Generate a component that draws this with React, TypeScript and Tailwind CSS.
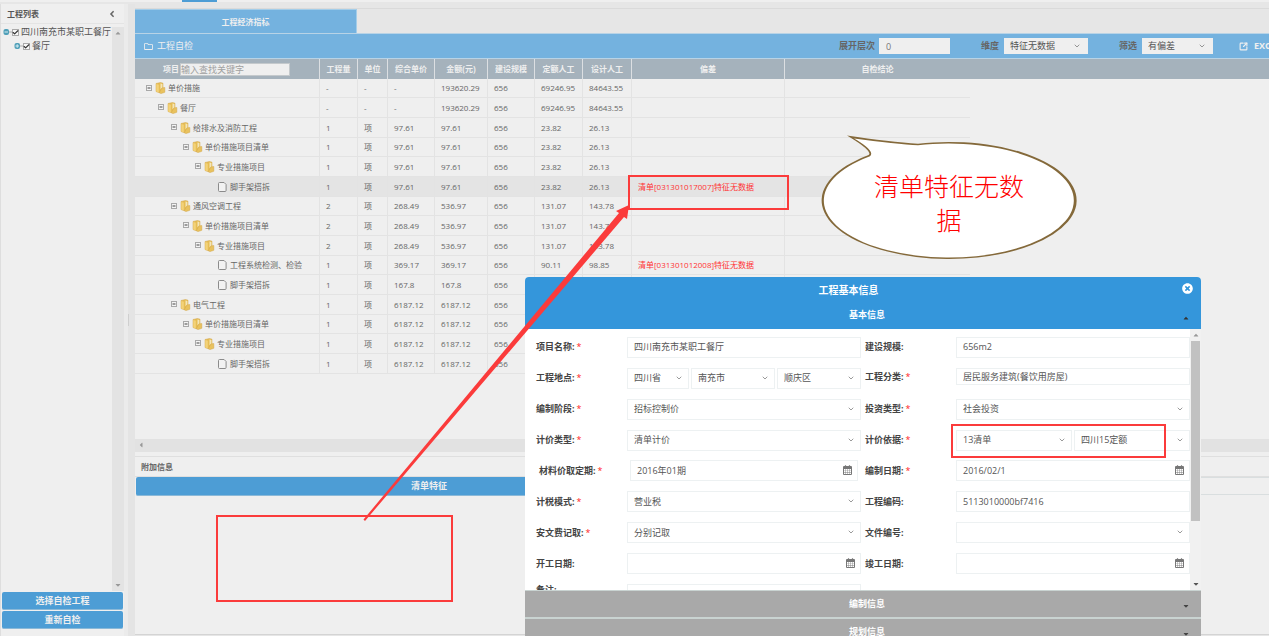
import React, { useState } from 'react';
import { Check, ChevronDown, SquareArrowOutUpRight } from 'lucide-react';
import { FaAngleLeft, FaCaretDown, FaCaretLeft, FaCaretUp, FaRegFolder, FaTimesCircle } from 'react-icons/fa';

interface Row {
  level: number;
  name: string;
  leaf?: boolean;
  cells: string[];
}

const COLUMNS = ['工程量', '单位', '综合单价', '金额(元)', '建设规模', '定额人工', '设计人工', '偏差', '自检结论'];

const ROWS: Row[] = [
  { level: 0, name: '单价措施', cells: ['-', '-', '-', '193620.29', '656', '69246.95', '84643.55', ''] },
  { level: 1, name: '餐厅', cells: ['-', '-', '-', '193620.29', '656', '69246.95', '84643.55', ''] },
  { level: 2, name: '给排水及消防工程', cells: ['1', '项', '97.61', '97.61', '656', '23.82', '26.13', ''] },
  { level: 3, name: '单价措施项目清单', cells: ['1', '项', '97.61', '97.61', '656', '23.82', '26.13', ''] },
  { level: 4, name: '专业措施项目', cells: ['1', '项', '97.61', '97.61', '656', '23.82', '26.13', ''] },
  { level: 5, name: '脚手架搭拆', leaf: true, cells: ['1', '项', '97.61', '97.61', '656', '23.82', '26.13', '清单[031301017007]特征无数据'] },
  { level: 2, name: '通风空调工程', cells: ['2', '项', '268.49', '536.97', '656', '131.07', '143.78', ''] },
  { level: 3, name: '单价措施项目清单', cells: ['2', '项', '268.49', '536.97', '656', '131.07', '143.78', ''] },
  { level: 4, name: '专业措施项目', cells: ['2', '项', '268.49', '536.97', '656', '131.07', '143.78', ''] },
  { level: 5, name: '工程系统检测、检验', leaf: true, cells: ['1', '项', '369.17', '369.17', '656', '90.11', '98.85', '清单[031301012008]特征无数据'] },
  { level: 5, name: '脚手架搭拆', leaf: true, cells: ['1', '项', '167.8', '167.8', '656', '', '', ''] },
  { level: 2, name: '电气工程', cells: ['1', '项', '6187.12', '6187.12', '656', '', '', ''] },
  { level: 3, name: '单价措施项目清单', cells: ['1', '项', '6187.12', '6187.12', '656', '', '', ''] },
  { level: 4, name: '专业措施项目', cells: ['1', '项', '6187.12', '6187.12', '656', '', '', ''] },
  { level: 5, name: '脚手架搭拆', leaf: true, cells: ['1', '项', '6187.12', '6187.12', '656', '', '', ''] },
];

const FolderIcon = () => (
  <svg width="11" height="12" viewBox="0 0 11 12" className="shrink-0">
    <path d="M1 1.5 5.500 .5 8 1.200v9.300H3.500L1 9.500z" fill="#e6bd55" stroke="#d3a648" strokeWidth=".5" />
    <path d="M1.300 2 3.800 2.800v7.400L1.300 9.500z" fill="#f3d27a" />
    <path d="M5.500 1.400 7.400 1.900v4.600l-1.900.8z" fill="#f4e6b8" />
    <path d="M6.800 6 9.800 5.500v4.800L6 11.600 4.200 10.800z" fill="#e9c25e" stroke="#d3a648" strokeWidth=".5" />
  </svg>
);

const FileIcon = () => (
  <svg width="11" height="12" viewBox="0 0 11 12" className="shrink-0">
    <path d="M2.500 1.500h4.600l2 2v6q0 1-1 1H2.500q-1 0-1-1v-7q0-1 1-1z" fill="#f2f2f2" stroke="#8b8b8b" strokeWidth="1" />
  </svg>
);

const MinusBox = () => (
  <svg width="7" height="7" viewBox="0 0 7 7" className="shrink-0">
    <rect x=".5" y=".5" width="5" height="5" fill="#f4f4f4" stroke="#a8a8a8" />
    <path d="M1.500 3h3" stroke="#444" />
  </svg>
);

const CalendarIcon = () => (
  <svg width="9" height="10" viewBox="0 0 9 10" className="pointer-events-none absolute top-[5px] right-[6px]">
    <rect y="1" width="9" height="9" rx="1" fill="#777" />
    <path d="M1 4h1.600v1.400H1zM3 4h1.300v1.400H3zM4.700 4H6v1.400H4.700zM6.400 4H8v1.400H6.400zM1 5.800h1.600v1.300H1zM3 5.800h1.300v1.300H3zM4.700 5.800H6v1.300H4.700zM6.400 5.800H8v1.300H6.400zM1 7.500h1.600V9H1zM3 7.500h1.300V9H3zM4.700 7.500H6V9H4.700zM6.400 7.500H8V9H6.400z" fill="#fff" />
    <path d="M2.500 .3v2M6.500 .3v2" stroke="#777" strokeWidth="1.200" />
  </svg>
);

const TreeCheck = ({ label, child }: { label: string; child?: boolean }) => (
  <label className={`flex h-[14px] items-center text-[9px] whitespace-nowrap text-[#555] ${child ? 'pl-[13px]' : 'pl-[2px]'}`}>
    <svg width="9" height="8" viewBox="0 0 9 8" className="shrink-0">
      <rect x=".5" y="1" width="5.500" height="6" rx="2" fill="#4f9fb8" />
      <path d={child ? 'M1.5 4h3.5M3.2 2.3v3.5' : 'M1.5 4h3.5'} stroke="#d8edf2" />
      <path d="M6 4h3" stroke="#aaa" />
    </svg>
    <span className="relative mr-[2px] flex">
      <input type="checkbox" defaultChecked className="h-[7px] w-[7px] appearance-none border border-[#aaa] bg-[#f8f8f8]" />
      <Check className="pointer-events-none absolute top-0 left-0 h-[7px] w-[7px] text-[#333]" strokeWidth={4} />
    </span>
    {label}
  </label>
);

interface PickProps {
  id?: string;
  label?: string;
  value: string;
  className?: string;
}

const Pick = ({ id, label, value, className = 'flex-1' }: PickProps) => (
  <span className={`relative flex h-[21px] ${className}`}>
    <select id={id} aria-label={label} className="w-full appearance-none border border-[#edf1f2] bg-white pl-[6px] text-[9px] text-[#555] outline-none">
      <option>{value}</option>
    </select>
    <ChevronDown className="pointer-events-none absolute top-[6px] right-[6px] h-2 w-2 text-[#666]" />
  </span>
);

const TextBox = ({ id, value, date, className = 'h-[21px]' }: { id: string; value: string; date?: boolean; className?: string }) => (
  <span className={`relative flex flex-1 ${className}`}>
    <input id={id} defaultValue={value} className="w-full min-w-0 border border-[#edf1f2] bg-white pl-[6px] text-[9px] text-[#555] outline-none" />
    {date && <CalendarIcon />}
  </span>
);

interface FieldProps {
  id: string;
  label: string;
  required?: boolean;
  className?: string;
  children: React.ReactNode;
}

const Field = ({ id, label, required, className = 'items-center', children }: FieldProps) => (
  <div className={`flex ${className}`}>
    <label htmlFor={id} className="w-[91px] shrink-0 text-[9px] font-bold whitespace-nowrap text-[#444]">
      {label}:{required && <span className="pl-[2px] font-normal text-[#f22]">*</span>}
    </label>
    {children}
  </div>
);

const ProjectDialog = () => (
  <div role="dialog" aria-label="工程基本信息" className="absolute top-[277px] bottom-0 left-[525px] flex w-[676px] flex-col overflow-hidden rounded-t-sm bg-white">
    <div className="flex h-[25px] shrink-0 items-center bg-[#3496db] pr-[8px] text-white">
      <h2 className="flex-1 pr-[10px] text-center text-[10px] font-bold">工程基本信息</h2>
      <button type="button" aria-label="关闭" className="mb-[3px]">
        <FaTimesCircle className="h-[11px] w-[11px]" />
      </button>
    </div>
    <button type="button" className="flex h-[27px] shrink-0 items-center bg-[#3496db] pr-[11px] pl-[27px] text-[9px] font-bold text-white">
      <span className="flex-1 pb-[2px]">基本信息</span>
      <FaCaretUp className="mt-[4px] h-[8px] w-[8px] text-[#333]" />
    </button>
    <div className="flex h-[261px] shrink-0 overflow-hidden">
      <form className="mt-[3px] grid h-[278px] flex-1 auto-rows-fr grid-cols-2 gap-x-1 pl-[11px]">
        <Field id="name" label="项目名称" required><TextBox id="name" value="四川南充市某职工餐厅" /></Field>
        <Field id="scale" label="建设规模"><TextBox id="scale" value="656m2" /></Field>
        <Field id="place" label="工程地点" required>
          <span className="flex flex-1 gap-[2px]">
            <Pick id="place" value="四川省" className="w-[62px]" />
            <Pick label="市" value="南充市" className="flex-1" />
            <Pick label="区" value="顺庆区" className="flex-1" />
          </span>
        </Field>
        <Field id="kind" label="工程分类" required className="items-center pb-[3px]"><TextBox id="kind" value="居民服务建筑(餐饮用房屋)" className="h-[17px]" /></Field>
        <Field id="stage" label="编制阶段" required><Pick id="stage" value="招标控制价" /></Field>
        <Field id="invest" label="投资类型" required><Pick id="invest" value="社会投资" /></Field>
        <Field id="pricing" label="计价类型" required><Pick id="pricing" value="清单计价" /></Field>
        <Field id="basis" label="计价依据" required>
          <span className="flex flex-1 gap-[2px]">
            <Pick id="basis" value="13清单" className="flex-1" />
            <Pick label="定额" value="四川15定额" className="flex-1" />
          </span>
        </Field>
        <Field id="period" label="材料价取定期" required className="items-center px-[3px]"><TextBox id="period" value="2016年01期" date /></Field>
        <Field id="made" label="编制日期" required><TextBox id="made" value="2016/02/1" date /></Field>
        <Field id="tax" label="计税模式" required><Pick id="tax" value="营业税" /></Field>
        <Field id="code" label="工程编码"><TextBox id="code" value="5113010000bf7416" /></Field>
        <Field id="fee" label="安文费记取" required><Pick id="fee" value="分别记取" /></Field>
        <Field id="file" label="文件编号"><Pick id="file" value="" /></Field>
        <Field id="start" label="开工日期"><TextBox id="start" value="" date /></Field>
        <Field id="end" label="竣工日期"><TextBox id="end" value="" date /></Field>
        <Field id="note" label="备注" className="items-start pt-[5px]"><TextBox id="note" value="" /></Field>
      </form>
      <div className="flex w-[11px] flex-col items-center bg-[#f1f1f1] text-[#555]">
        <FaCaretUp className="my-[2px] h-[8px] w-[8px] shrink-0 text-[#999]" />
        <div className="h-[180px] w-[9px] bg-[#c1c1c1]" />
        <FaCaretDown className="mt-auto mb-[2px] h-[8px] w-[8px] shrink-0" />
      </div>
    </div>
    {['编制信息', '规划信息'].map(title => (
      <button key={title} type="button" className="flex h-[28px] shrink-0 items-center border-t border-b border-[#c9d3d1] bg-[#a9a9a9] pr-[11px] pl-[27px] text-[9px] font-bold text-white">
        <span className="flex-1">{title}</span>
        <FaCaretDown className="mt-[4px] h-[8px] w-[8px] text-[#444]" />
      </button>
    ))}
  </div>
);

const ToolPick = ({ id, label, value, className }: { id: string; label: string; value: string; className: string }) => (
  <span className="flex items-center gap-[5px]">
    <label htmlFor={id} className="font-bold text-[#666]">{label}</label>
    <span className={`relative flex h-4 ${className}`}>
      <select id={id} className="w-full appearance-none bg-[#efefef] pl-[6px] text-[9px] text-[#555] outline-none">
        <option>{value}</option>
      </select>
      <ChevronDown className="pointer-events-none absolute top-1 right-[7px] h-2 w-2 text-[#666]" />
    </span>
  </span>
);

const App: React.FC = () => {
  const [selected, setSelected] = useState(5);

  return (
    <div className="relative flex h-screen flex-col overflow-hidden bg-[#e6e6e6] font-['Open_Sans','Noto_Sans_CJK_SC',sans-serif] text-[8px] leading-[12px] text-[#666]">
      <div className="h-[4px] shrink-0 border-b-2 border-[#e6e6e6] bg-[#efefef] pl-[182px]">
        <div className="h-[2px] w-[35px] bg-[#4d9dd5]" />
      </div>
      <div className="flex min-h-0 flex-1">
        <aside className="flex w-[124px] shrink-0 flex-col border-l border-[#dedede] bg-[#efefef] pb-[7px]">
          <div className="flex h-[20px] shrink-0 items-center justify-between border-b border-[#e4e4e4] pr-[7px] pl-[6px]">
            <h2 className="font-bold text-[#555]">工程列表</h2>
            <button type="button" aria-label="收起"><FaAngleLeft className="h-[10px] w-[10px]" /></button>
          </div>
          <div className="flex flex-1">
            <div className="w-[111px] pt-[1px]">
              <TreeCheck label="四川南充市某职工餐厅" />
              <TreeCheck label="餐厅" child />
            </div>
            <div className="mt-[3px] flex flex-1 flex-col items-center justify-between bg-[#e3e3e3] pt-[2px] pb-[2px] text-[#999]">
              <FaCaretUp className="h-[8px] w-[8px]" />
              <FaCaretDown className="h-[8px] w-[8px]" />
            </div>
          </div>
          <div className="flex flex-col gap-[1px] pt-[1px] pr-[1px] pl-[1px]">
            <button type="button" className="h-[18px] rounded-[2px] border-b border-[#8bb9d8] bg-[#4d9dd5] text-[9px] font-bold text-[#efefef]">选择自检工程</button>
            <button type="button" className="h-[18px] rounded-[2px] border-b border-[#8bb9d8] bg-[#4d9dd5] text-[9px] font-bold text-[#efefef]">重新自检</button>
          </div>
        </aside>
        <div className="flex w-[11px] shrink-0 items-center border-l-4 border-[#ebebeb] bg-[#e4e4e4]">
          <div className="h-[12px] w-[1px] bg-[#cfcfcf]" />
        </div>

        <main className="mt-[4px] flex min-w-0 flex-1 flex-col border-t border-[#dadada] pb-[1px]">
          <div className="h-[24px] shrink-0">
            <button type="button" className="block h-full w-[222px] border-t border-r border-[#a3cde9] bg-[#74b2df] font-bold text-[#efefef]">工程经济指标</button>
          </div>
          <div className="flex h-[26px] shrink-0 items-center border-t border-b border-[#b8d3e6] bg-[#74b2df] pl-[9px] text-[9px]">
            <FaRegFolder className="mr-[4px] h-[9px] w-[9px] text-[#efefef]" />
            <span className="text-[#efefef]">工程自检</span>
            <div className="ml-auto flex shrink-0 items-center">
              <label htmlFor="depth" className="mr-[4px] font-bold text-[#666]">展开层次</label>
              <input id="depth" defaultValue="0" className="mr-[31px] h-4 w-[71px] bg-[#efefef] pl-[7px] text-[9px] text-[#777] outline-none" />
              <ToolPick id="dimension" label="维度" value="特征无数据" className="mr-[31px] w-[84px]" />
              <ToolPick id="filter" label="筛选" value="有偏差" className="mr-[26px] w-[71px]" />
              <button type="button" className="flex w-[30px] items-center gap-[6px] font-bold text-[#efefef]">
                <SquareArrowOutUpRight className="h-[9px] w-[9px] shrink-0" strokeWidth={3} />
                EXC
              </button>
            </div>
          </div>

          <div className="relative h-[380px] shrink-0 overflow-hidden bg-[#efefef]">
            <div className="absolute inset-x-0 top-0 h-[20px] bg-[#a5b2bc]" />
            <table className="relative w-[835px] table-fixed border-separate border-spacing-0">
              <colgroup>
                <col className="w-[185px]" />
                <col className="w-[38px]" />
                <col className="w-[30px]" />
                <col className="w-[47px]" />
                <col className="w-[53px]" />
                <col className="w-[47px]" />
                <col className="w-[48px]" />
                <col className="w-[49px]" />
                <col className="w-[153px]" />
                <col className="w-[185px]" />
              </colgroup>
              <thead>
                <tr className="h-[20px] bg-[#a5b2bc] text-[#efefef]">
                  <th className="border-r border-[#dcdfe2] p-0">
                    <label className="flex items-center pl-[28px]">
                      项目
                      <input placeholder="输入查找关键字" className="ml-[1px] h-[13px] w-[110px] border border-[#c4c9cc] bg-[#efefef] text-[9px] font-normal text-[#666] outline-none placeholder:text-[#a0a0a0]" />
                    </label>
                  </th>
                  {COLUMNS.map((title, i) => (
                    <th key={title} className={`p-0 font-bold whitespace-nowrap ${i < 8 ? 'border-r border-[#dcdfe2]' : ''}`}>{title}</th>
                  ))}
                </tr>
              </thead>
              <tbody>
                {ROWS.map((row, i) => (
                  <tr key={i} onClick={() => setSelected(i)} className={`${i % 3 === 0 ? 'h-[19px]' : 'h-[20px]'} ${i === selected ? 'bg-[#e4e4e4]' : ''}`}>
                    <td className="border-r border-b border-[#e3e3e3] p-0">
                      <span className="flex items-center whitespace-nowrap" style={{ paddingLeft: 11 + Math.round(row.level * 12.3) }}>
                        {row.leaf ? <span className="w-[7px]" /> : <MinusBox />}
                        <span className="mr-[2px] ml-[2px] flex">{row.leaf ? <FileIcon /> : <FolderIcon />}</span>
                        {row.name}
                      </span>
                    </td>
                    {row.cells.map((cell, c) => (
                      <td key={c} className={`border-r border-b border-[#e3e3e3] p-0 pl-[6px] whitespace-nowrap ${c === 7 ? 'text-[#f33]' : ''}`}>{cell}</td>
                    ))}
                    <td className="border-b border-[#e3e3e3] p-0" />
                  </tr>
                ))}
              </tbody>
            </table>
          </div>
          <div className="flex h-[13px] shrink-0 items-center bg-[#e2e2e2] pb-[2px] pl-[2px] text-[#999]">
            <FaCaretLeft className="h-[8px] w-[8px]" />
          </div>
          <div className="h-[4px] shrink-0 bg-[#efefef]" />
          <h3 className="flex h-[21px] shrink-0 items-center border-t border-b border-[#dfdfdf] bg-[#efefef] pl-[6px] font-bold text-[#666]">附加信息</h3>
          <div className="grid min-h-0 flex-1 grid-cols-[587px_1fr] items-start border-b border-[#d4d4d4] bg-[#efefef]">
            <button type="button" className="ml-[1px] h-[19px] rounded-[2px] border-b border-[#8bb9d8] bg-[#4d9dd5] text-[9px] font-bold text-[#efefef]">清单特征</button>
            <div className="h-[18px] border-t border-b border-[#d9dedf]" />
          </div>
        </main>
      </div>

      <ProjectDialog />

      {/* annotations on top of the page */}
      <svg width="1269" height="636" className="pointer-events-none absolute top-0 left-0">
        <path d="M847 135.500C875 140 900 142.500 918 143.700A127.500 58.500 0 1 1 868 155.300C874 153 860 143 847 135.500Z" fill="#84693a" />
        <path d="M854 138.500C880 142 905 144.500 918 145.300A125 57 0 1 1 870 156.300C875 152 864 144 854 138.500Z" fill="#fff" />
        <path d="M363.500 519.500 619 213l-3-2 13-6-2 14-3-2L365 521Z" fill="#fb3b3b" />
      </svg>
      <p className="pointer-events-none absolute top-[169px] left-[869px] w-[160px] text-center text-[25px] leading-[34px] font-light text-[#f00]">清单特征无数据</p>
      <div className="pointer-events-none absolute top-[175px] left-[628px] h-[35px] w-[161px] border-2 border-[#fb3b3b]" />
      <div className="pointer-events-none absolute top-[515px] left-[216px] h-[87px] w-[237px] border-2 border-[#fb3b3b]" />
      <div className="pointer-events-none absolute top-[424px] left-[951px] h-[34px] w-[215px] border-2 border-[#fb3b3b]" />
    </div>
  );
};

export default App;
